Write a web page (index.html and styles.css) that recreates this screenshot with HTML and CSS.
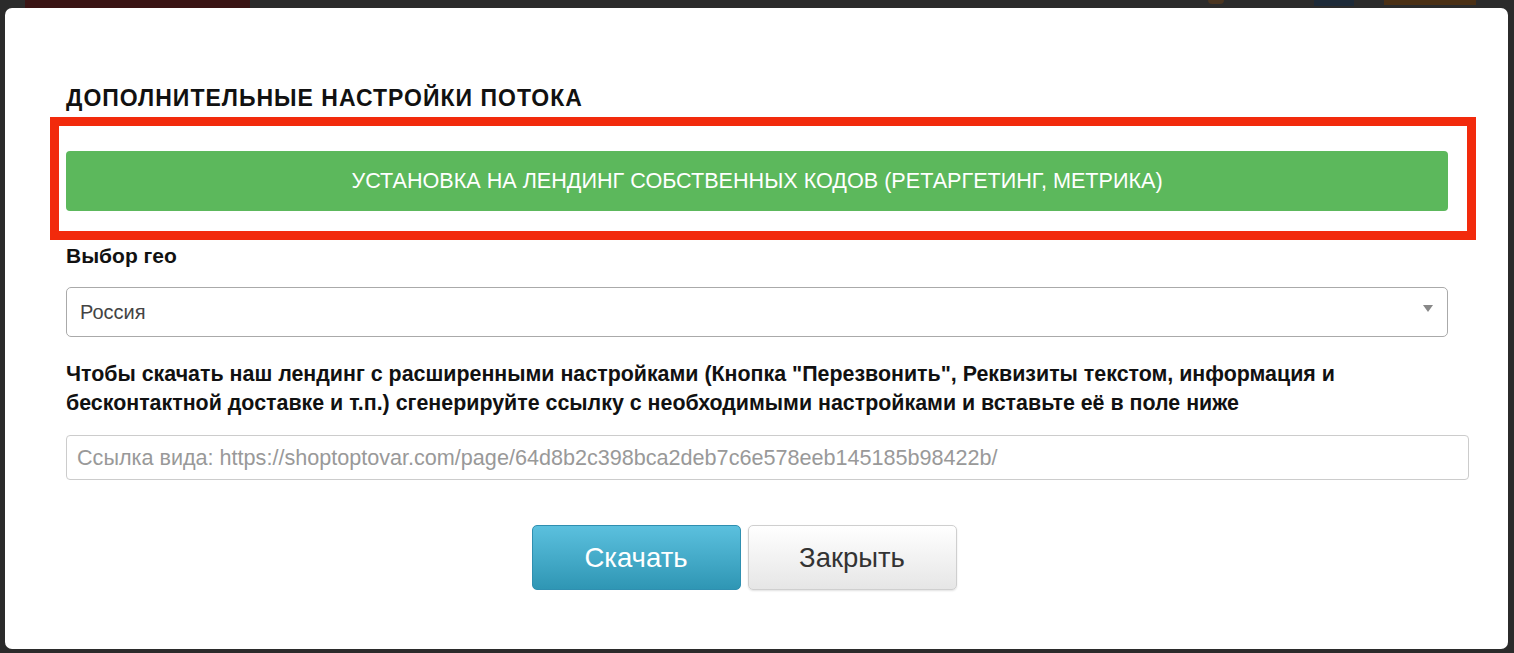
FILE: index.html
```html
<!DOCTYPE html>
<html lang="ru">
<head>
<meta charset="utf-8">
<title>Дополнительные настройки потока</title>
<link rel="stylesheet" href="styles.css">
</head>
<body>
<div class="backdrop">
  <div class="page-hint">
    <span class="hint-logo"></span>
    <span class="hint-spacer"></span>
    <span class="hint-dot"></span>
    <span class="hint-badge"></span>
    <span class="hint-btn"></span>
  </div>
  <div class="modal">
    <h3 class="modal-title">ДОПОЛНИТЕЛЬНЫЕ НАСТРОЙКИ ПОТОКА</h3>
    <div class="codes">
      <button class="btn-success" type="button">УСТАНОВКА НА ЛЕНДИНГ СОБСТВЕННЫХ КОДОВ (РЕТАРГЕТИНГ, МЕТРИКА)</button>
      <span class="annotation"></span>
    </div>
    <label class="field-label">Выбор гео</label>
    <div class="select">
      <span class="select-value">Россия</span>
      <span class="select-arrow"></span>
    </div>
    <p class="hint-text">Чтобы скачать наш лендинг с расширенными настройками (Кнопка "Перезвонить", Реквизиты текстом, информация и<br>бесконтактной доставке и т.п.) сгенерируйте ссылку с необходимыми настройками и вставьте её в поле ниже</p>
    <div class="link-input">
      <span class="placeholder">Ссылка вида: https://shoptoptovar.com/page/64d8b2c398bca2deb7c6e578eeb145185b98422b/</span>
    </div>
    <div class="actions">
      <button class="btn btn-info" type="button">Скачать</button>
      <button class="btn btn-default" type="button">Закрыть</button>
    </div>
  </div>
</div>
</body>
</html>
```

FILE: styles.css
```css
* { box-sizing: border-box; }
html, body {
  margin: 0;
  padding: 0;
  height: 100%;
  overflow: hidden;
}
body {
  background: #2c2c2c;
  font-family: "Liberation Sans", Arial, Helvetica, sans-serif;
  color: #111;
}
.backdrop {
  position: relative;
  width: 1514px;
  height: 653px;
  background: #2b2b2b;
}
.page-hint {
  display: flex;
  height: 8px;
  align-items: flex-start;
}
.hint-logo {
  width: 225px;
  height: 8px;
  margin-left: 25px;
  background: #3a1414;
}
.hint-spacer { flex: 1; }
.hint-dot {
  width: 16px;
  height: 4px;
  background: #4a3520;
  border-radius: 0 0 8px 8px;
  margin-right: 90px;
}
.hint-badge {
  width: 40px;
  height: 6px;
  background: #1d2a38;
  margin-right: 30px;
}
.hint-btn {
  width: 92px;
  height: 5px;
  background: #4a3015;
  margin-right: 38px;
}
.modal {
  margin: 0 6px 0 5px;
  height: 641px;
  background: #fff;
  border-radius: 7px;
  padding: 77px 60px 0 61px;
}
.modal-title {
  margin: 0;
  font-size: 23px;
  line-height: 26px;
  font-weight: bold;
  letter-spacing: 1px;
  color: #111;
}
.codes {
  position: relative;
  margin-top: 40px;
}
.btn-success {
  display: block;
  width: 100%;
  height: 60px;
  border: 0;
  border-radius: 4px;
  background: #5cb85c;
  color: #fff;
  font-family: inherit;
  font-size: 21.6px;
  text-transform: uppercase;
}
.annotation {
  position: absolute;
  top: -34px;
  left: -16px;
  right: -28px;
  bottom: -29px;
  border: 9px solid #f22a0c;
  pointer-events: none;
}
.field-label {
  display: block;
  margin-top: 33px;
  font-size: 21px;
  line-height: 24px;
  font-weight: bold;
}
.select {
  display: flex;
  align-items: center;
  justify-content: space-between;
  margin-top: 19px;
  height: 50px;
  border: 1px solid #aaa;
  border-radius: 5px;
  padding: 0 14px 0 13px;
}
.select-value {
  font-size: 20px;
  color: #444;
}
.select-arrow {
  width: 0;
  height: 0;
  border-left: 5px solid transparent;
  border-right: 5px solid transparent;
  border-top: 7px solid #888;
  margin-top: -8px;
}
.hint-text {
  margin: 23px 0 0;
  font-size: 21.4px;
  line-height: 29px;
  font-weight: bold;
  color: #111;
}
.link-input {
  display: flex;
  align-items: center;
  margin-top: 17px;
  margin-right: -21px;
  height: 45px;
  border: 1px solid #ccc;
  border-radius: 4px;
  padding: 0 10px;
}
.placeholder {
  font-size: 21.6px;
  color: #999;
}
.actions {
  display: flex;
  justify-content: center;
  gap: 7px;
  margin-top: 45px;
  padding-right: 26px;
}
.btn {
  width: 209px;
  height: 65px;
  border-radius: 5px;
  font-family: inherit;
  font-size: 27.5px;
}
.btn-info {
  color: #fff;
  border: 1px solid #2f8fb0;
  background: linear-gradient(#5bc0de, #2f96b4);
}
.btn-default {
  color: #333;
  border: 1px solid #cfcfcf;
  background: linear-gradient(#ffffff, #e6e6e6);
  box-shadow: 0 1px 2px rgba(0,0,0,0.12);
}
```
